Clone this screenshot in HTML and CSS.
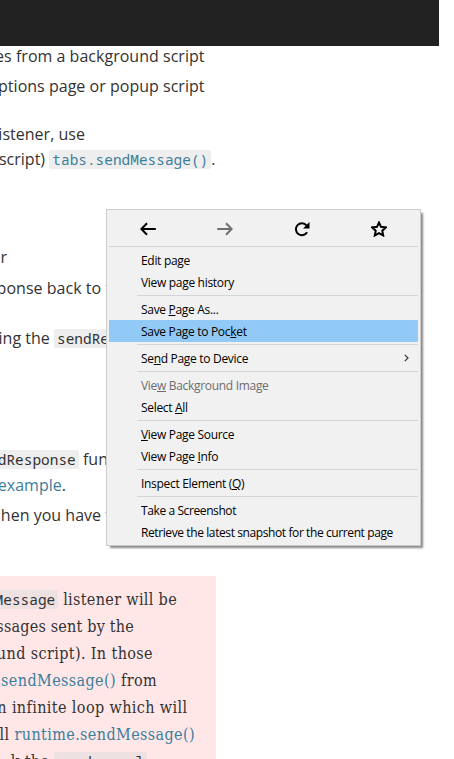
FILE: index.html
```html
<!DOCTYPE html>
<html lang="en">
<head>
<meta charset="utf-8">
<title>Messages</title>
<link rel="stylesheet" href="styles.css">
</head>
<body>
<header class="topbar"></header>
<main class="article">
  <p class="line w204"><span>es from a background script</span></p>
  <p class="line w204 gap4"><span>ptions page or popup script</span></p>
  <p class="line w85 gap22"><span>istener, use</span></p>
  <p class="line w215 gap-1"><span>script) <code class="link">tabs.sendMessage()</code>.</span></p>
  <p class="line w7 gap72"><span>r</span></p>
  <p class="line w111 gap5"><span>ponse back to t</span></p>
  <p class="line w112 gap24"><span>ing the <code>sendRe</code></span></p>
  <p class="line w107 gap95"><span><code>dResponse</code> fun</span></p>
  <p class="line w66"><span><a class="link">example</a>.</span></p>
  <p class="line w111 gap4"><span>hen you have t</span></p>
  <aside class="warning">
    <p class="note n177"><span><code>Message</code> listener will be</span></p>
    <p class="note n134"><span>ssages sent by the</span></p>
    <p class="note n153"><span>und script). In those</span></p>
    <p class="note n157"><span><a class="link">.sendMessage()</a> from</span></p>
    <p class="note n187"><span>n infinite loop which will</span></p>
    <p class="note n195"><span>ll <a class="link">runtime.sendMessage()</a></span></p>
    <p class="note n147"><span>k the <code>sender.url</code></span></p>
  </aside>
</main>
<nav class="menu">
  <div class="tools">
    <svg viewBox="0 0 16 16"><path d="M15.8 8H1.5M7 2.2 1.4 8 7 13.8"/></svg>
    <svg class="off" viewBox="0 0 16 16"><path d="M.2 8h14.3M9 2.2 14.6 8 9 13.8"/></svg>
    <svg viewBox="0 0 16 16"><path d="M13.1 11.2A6 6 0 1 1 12.5 4.3"/><path class="fill" d="M15.5 1v6.5H9z"/></svg>
    <svg viewBox="0 0 16 16"><path d="m8 1.5 2 4.3 4.8.6-3.5 3.3.9 4.8L8 12.2l-4.2 2.3.9-4.8L1.2 6.4 6 5.8z"/></svg>
  </div>
  <div class="sep full"></div>
  <div class="item">Edit page</div>
  <div class="item">View page history</div>
  <div class="sep"></div>
  <div class="item">Save <u>P</u>age As...</div>
  <div class="item active">Save Page to Poc<u>k</u>et</div>
  <div class="sep"></div>
  <div class="item sub"><span>Se<u>n</u>d Page to Device</span><svg class="chev" viewBox="0 0 5 8"><path d="m.8.8 3.2 3.2L.8 7.2"/></svg></div>
  <div class="sep"></div>
  <div class="item disabled">Vie<u>w</u> Background Image</div>
  <div class="item">Select <u>A</u>ll</div>
  <div class="sep"></div>
  <div class="item"><u>V</u>iew Page Source</div>
  <div class="item">View Page <u>I</u>nfo</div>
  <div class="sep"></div>
  <div class="item">Inspect Element (<u>Q</u>)</div>
  <div class="sep"></div>
  <div class="item tight">Take a Screenshot</div>
  <div class="item tight">Retrieve the latest snapshot for the current page</div>
</nav>
</body>
</html>
```
FILE: styles.css
```css
* { box-sizing: border-box; }
body {
  margin: 0;
  height: 759px;
  overflow: hidden;
  position: relative;
  background: #fff;
  color: #333;
  font: 16px/26px "Open Sans", sans-serif;
}
p { margin: 0; }
.topbar { width: 439px; height: 46px; background: #222; }
.article { margin-top: -3px; }
.line, .note {
  display: flex;
  justify-content: flex-end;
  white-space: nowrap;
}
.line { height: 26px; letter-spacing: .02px; }
.w204 { width: 204.5px; }
.w85 { width: 85px; }
.w215 { width: 215.5px; }
.w7 { width: 7px; }
.w111 { width: 111px; }
.w112 { width: 112px; }
.w107 { width: 108px; }
.w66 { width: 66px; }
.gap-1 { margin-top: -1px; }
.gap4 { margin-top: 4px; }
.gap5 { margin-top: 5px; }
.gap22 { margin-top: 22px; }
.gap24 { margin-top: 24px; }
.gap72 { margin-top: 72px; }
.gap95 { margin-top: 95px; }
.link { color: #3d7e9a; }
code {
  padding: 0 3px;
  border-radius: 2px;
  background: #eee;
  font: 14.4px/20px "Noto Sans Mono", "DejaVu Sans Mono", monospace;
  letter-spacing: .03px;
}
.warning {
  width: 216px;
  height: 184px;
  margin-top: 48px;
  padding-top: 10px;
  overflow: hidden;
  background: #ffe7e8;
  font: 16px/27px "DejaVu Serif Condensed", "DejaVu Serif", serif;
  letter-spacing: .38px;
}
.warning code { background: rgba(220, 220, 220, .5); }
.note { height: 27px; }
.n177 { width: 177px; letter-spacing: .33px; }
.n134 { width: 134px; letter-spacing: .2px; }
.n153 { width: 153px; }
.n157 { width: 157px; }
.n187 { width: 187.5px; }
.n195 { width: 195px; }
.n147 { width: 147px; }
.menu {
  position: absolute;
  left: 106px;
  top: 209px;
  width: 315px;
  height: 337px;
  padding: 2px;
  border: 1px solid #ccc;
  background: #f1f1f1;
  box-shadow: 3px 3px 2px -1px #888;
  color: #000;
  font: 12px/23px "Open Sans", sans-serif;
  letter-spacing: -.31px;
}
.tools {
  display: flex;
  justify-content: space-around;
  align-items: center;
  height: 32px;
  padding-top: 2px;
}
.tools svg { width: 16px; height: 16px; }
svg path { fill: none; stroke: #000; stroke-width: 2; }
.tools .off path { stroke: #707070; }
.tools path.fill { fill: #000; stroke: none; }
.sep { height: 5px; padding: 2px 0; margin-left: 28px; }
.sep::before { content: ""; display: block; height: 1px; background: #d4d4d4; }
.sep.full { margin-left: 0; }
.item { height: 22px; padding-left: 32px; white-space: nowrap; }
.item u { text-underline-offset: 1px; }
.tight { letter-spacing: -.4px; }
.active { background: #91c9f7; }
.active:not(.full) { margin-left: 0; }
.disabled { color: #6d6d6d; }
.sub { display: flex; justify-content: space-between; align-items: center; padding-right: 9px; }
.chev { width: 5px; height: 8px; }
.chev path { stroke: #333; stroke-width: 1.2; }
```
